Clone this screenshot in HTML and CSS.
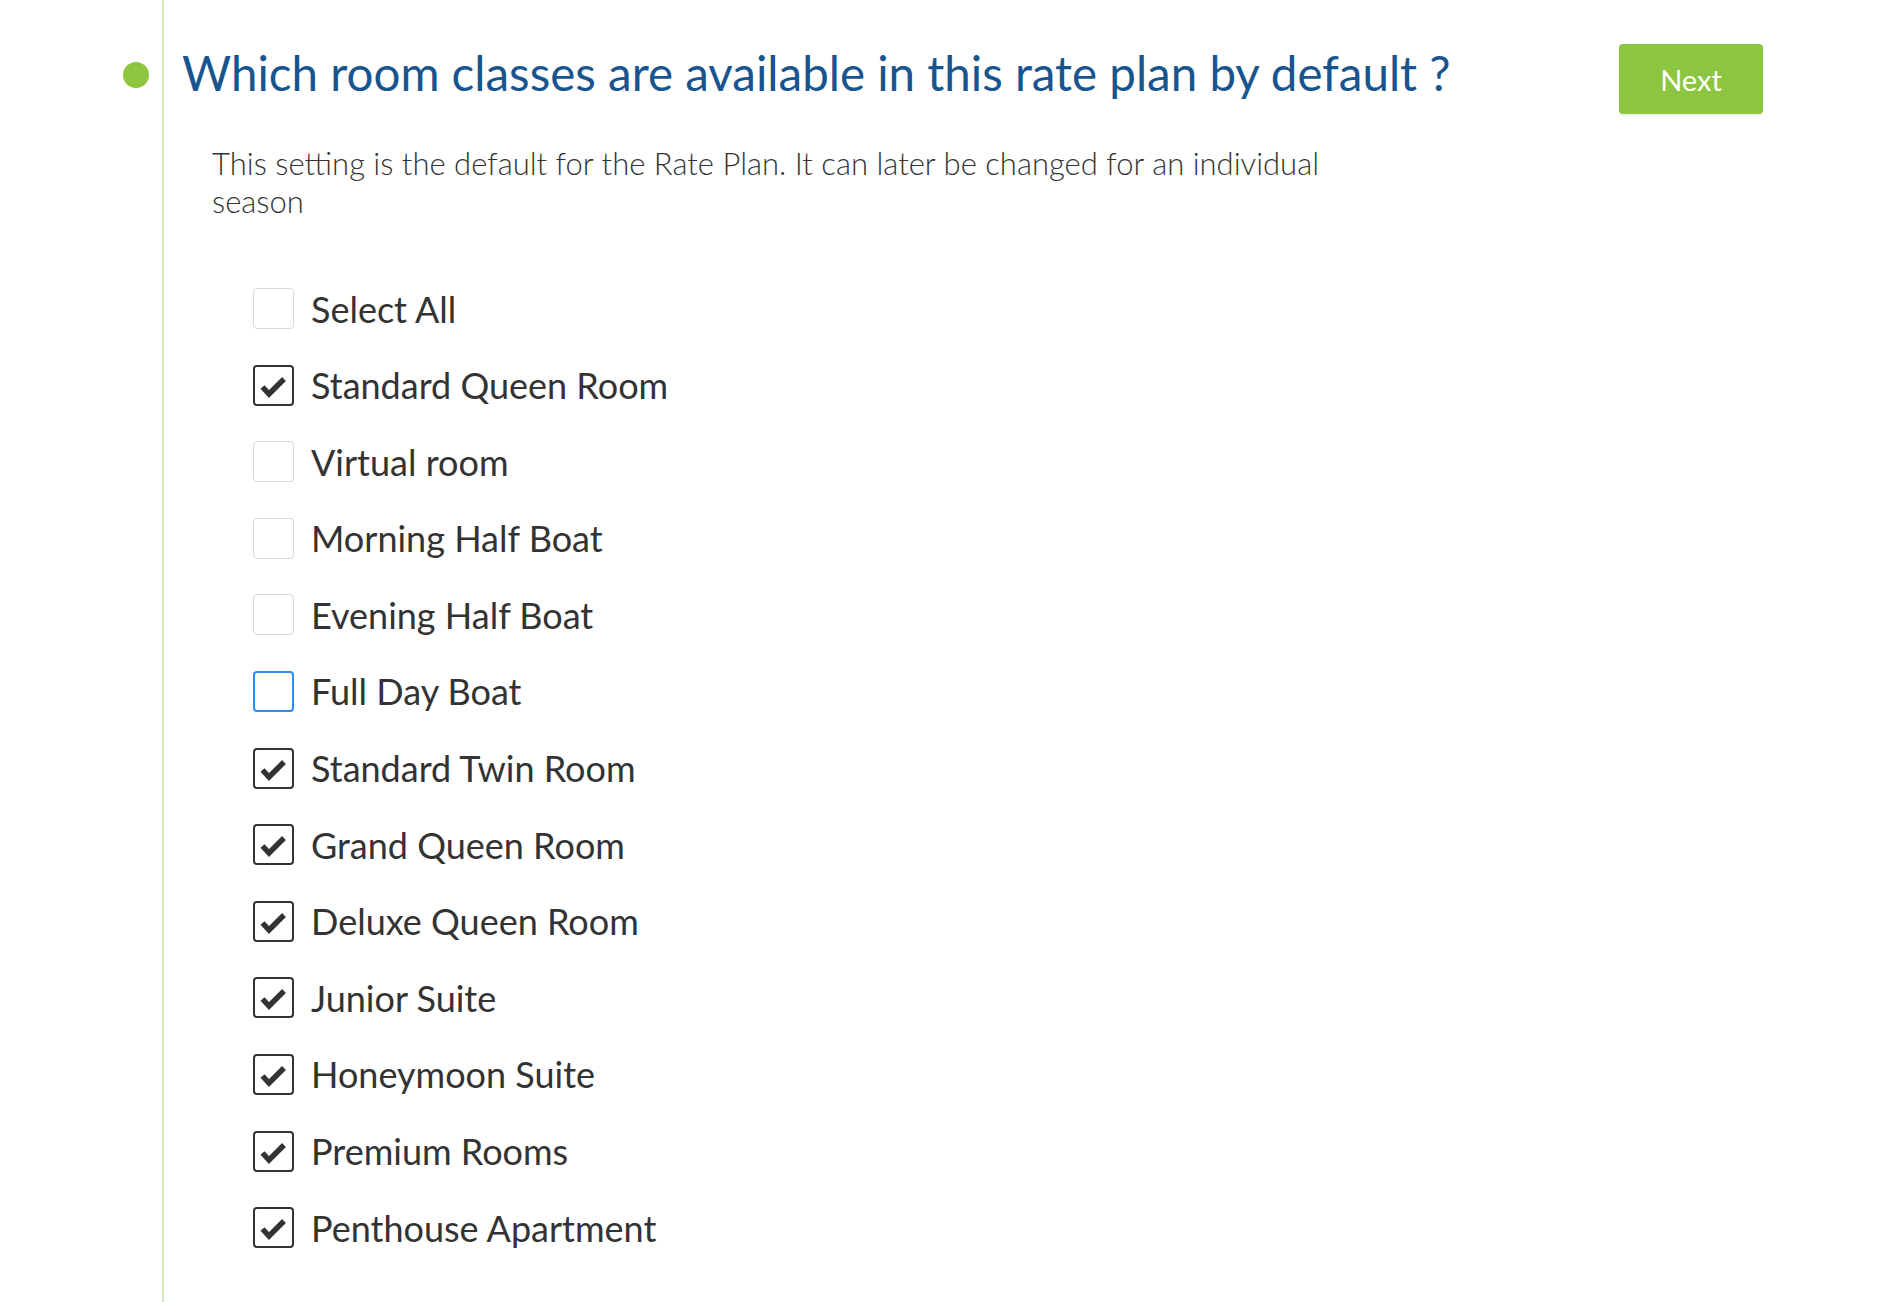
FILE: index.html
```html
<!DOCTYPE html>
<html lang="en">
<head>
<meta charset="utf-8">
<title>Rate plan room classes</title>
<link rel="stylesheet" href="styles.css">
</head>
<body>
<div class="page">
  <div class="gutter"><span class="dot"></span></div>
  <main class="step">
    <div class="step-head">
      <h1 class="title">Which room classes are available in this rate plan by default ?</h1>
      <button class="next">Next</button>
    </div>
    <p class="desc">This setting is the default for the Rate Plan. It can later be changed for an individual season</p>
    <ul class="options">
      <li class="option"><span class="box"></span><span class="label">Select All</span></li>
      <li class="option"><span class="box checked"><svg viewBox="0 0 41 41"><polyline points="9.5,22 16,29 31,14"/></svg></span><span class="label">Standard Queen Room</span></li>
      <li class="option"><span class="box"></span><span class="label">Virtual room</span></li>
      <li class="option"><span class="box"></span><span class="label">Morning Half Boat</span></li>
      <li class="option"><span class="box"></span><span class="label">Evening Half Boat</span></li>
      <li class="option"><span class="box focus"></span><span class="label">Full Day Boat</span></li>
      <li class="option"><span class="box checked"><svg viewBox="0 0 41 41"><polyline points="9.5,22 16,29 31,14"/></svg></span><span class="label">Standard Twin Room</span></li>
      <li class="option"><span class="box checked"><svg viewBox="0 0 41 41"><polyline points="9.5,22 16,29 31,14"/></svg></span><span class="label">Grand Queen Room</span></li>
      <li class="option"><span class="box checked"><svg viewBox="0 0 41 41"><polyline points="9.5,22 16,29 31,14"/></svg></span><span class="label">Deluxe Queen Room</span></li>
      <li class="option"><span class="box checked"><svg viewBox="0 0 41 41"><polyline points="9.5,22 16,29 31,14"/></svg></span><span class="label">Junior Suite</span></li>
      <li class="option"><span class="box checked"><svg viewBox="0 0 41 41"><polyline points="9.5,22 16,29 31,14"/></svg></span><span class="label">Honeymoon Suite</span></li>
      <li class="option"><span class="box checked"><svg viewBox="0 0 41 41"><polyline points="9.5,22 16,29 31,14"/></svg></span><span class="label">Premium Rooms</span></li>
      <li class="option"><span class="box checked"><svg viewBox="0 0 41 41"><polyline points="9.5,22 16,29 31,14"/></svg></span><span class="label">Penthouse Apartment</span></li>
    </ul>
  </main>
</div>
</body>
</html>
```

FILE: styles.css
```css
* { box-sizing: border-box; }
html, body {
  margin: 0;
  padding: 0;
  background: #fff;
  font-family: Lato, "Open Sans", "Liberation Sans", sans-serif;
  color: #333;
}
.page {
  display: grid;
  grid-template-columns: 162px 1fr;
  min-height: 100vh;
}
.gutter {
  display: flex;
  justify-content: flex-end;
  align-items: flex-start;
  padding-top: 62px;
  padding-right: 13px;
}
.dot {
  width: 26px;
  height: 26px;
  border-radius: 50%;
  background: #8dc63f;
}
.step {
  border-left: 2px solid #d4e7be;
  padding: 44px 117px 40px 18px;
}
.step-head {
  display: flex;
  justify-content: space-between;
  align-items: flex-start;
}
.title {
  margin: 0;
  font-size: 47.5px;
  line-height: 57px;
  font-weight: 400;
  color: #18558f;
}
.next {
  width: 144px;
  height: 70px;
  border: none;
  border-radius: 4px;
  background: #8cc540;
  color: #fff;
  font-family: Lato, "Open Sans", sans-serif;
  font-size: 29px;
  box-shadow: 0 2px 2px rgba(0,0,0,0.06);
  padding: 0;
}
.desc {
  margin: 30px 0 0 30px;
  max-width: 1160px;
  font-size: 31px;
  line-height: 38px;
  font-weight: 300;
  color: #333;
}
.options {
  list-style: none;
  margin: 68px 0 0 71px;
  padding: 0;
  display: flex;
  flex-direction: column;
  gap: 35.6px;
}
.option {
  display: flex;
  align-items: center;
  gap: 17px;
  height: 41px;
}
.box {
  width: 41px;
  height: 41px;
  border: 1.5px solid #d9d9d9;
  border-radius: 4px;
  flex: none;
  display: block;
}
.box svg {
  display: block;
  margin: -2px;
  width: 41px;
  height: 41px;
}
.box svg polyline {
  fill: none;
  stroke: #333;
  stroke-width: 5.5;
  stroke-linecap: butt;
  stroke-linejoin: miter;
}
.box.checked {
  border: 2px solid #333;
}
.box.focus {
  border: 2px solid #2b8cf2;
}
.label {
  font-size: 36px;
  line-height: 40px;
  color: #333;
}
```
